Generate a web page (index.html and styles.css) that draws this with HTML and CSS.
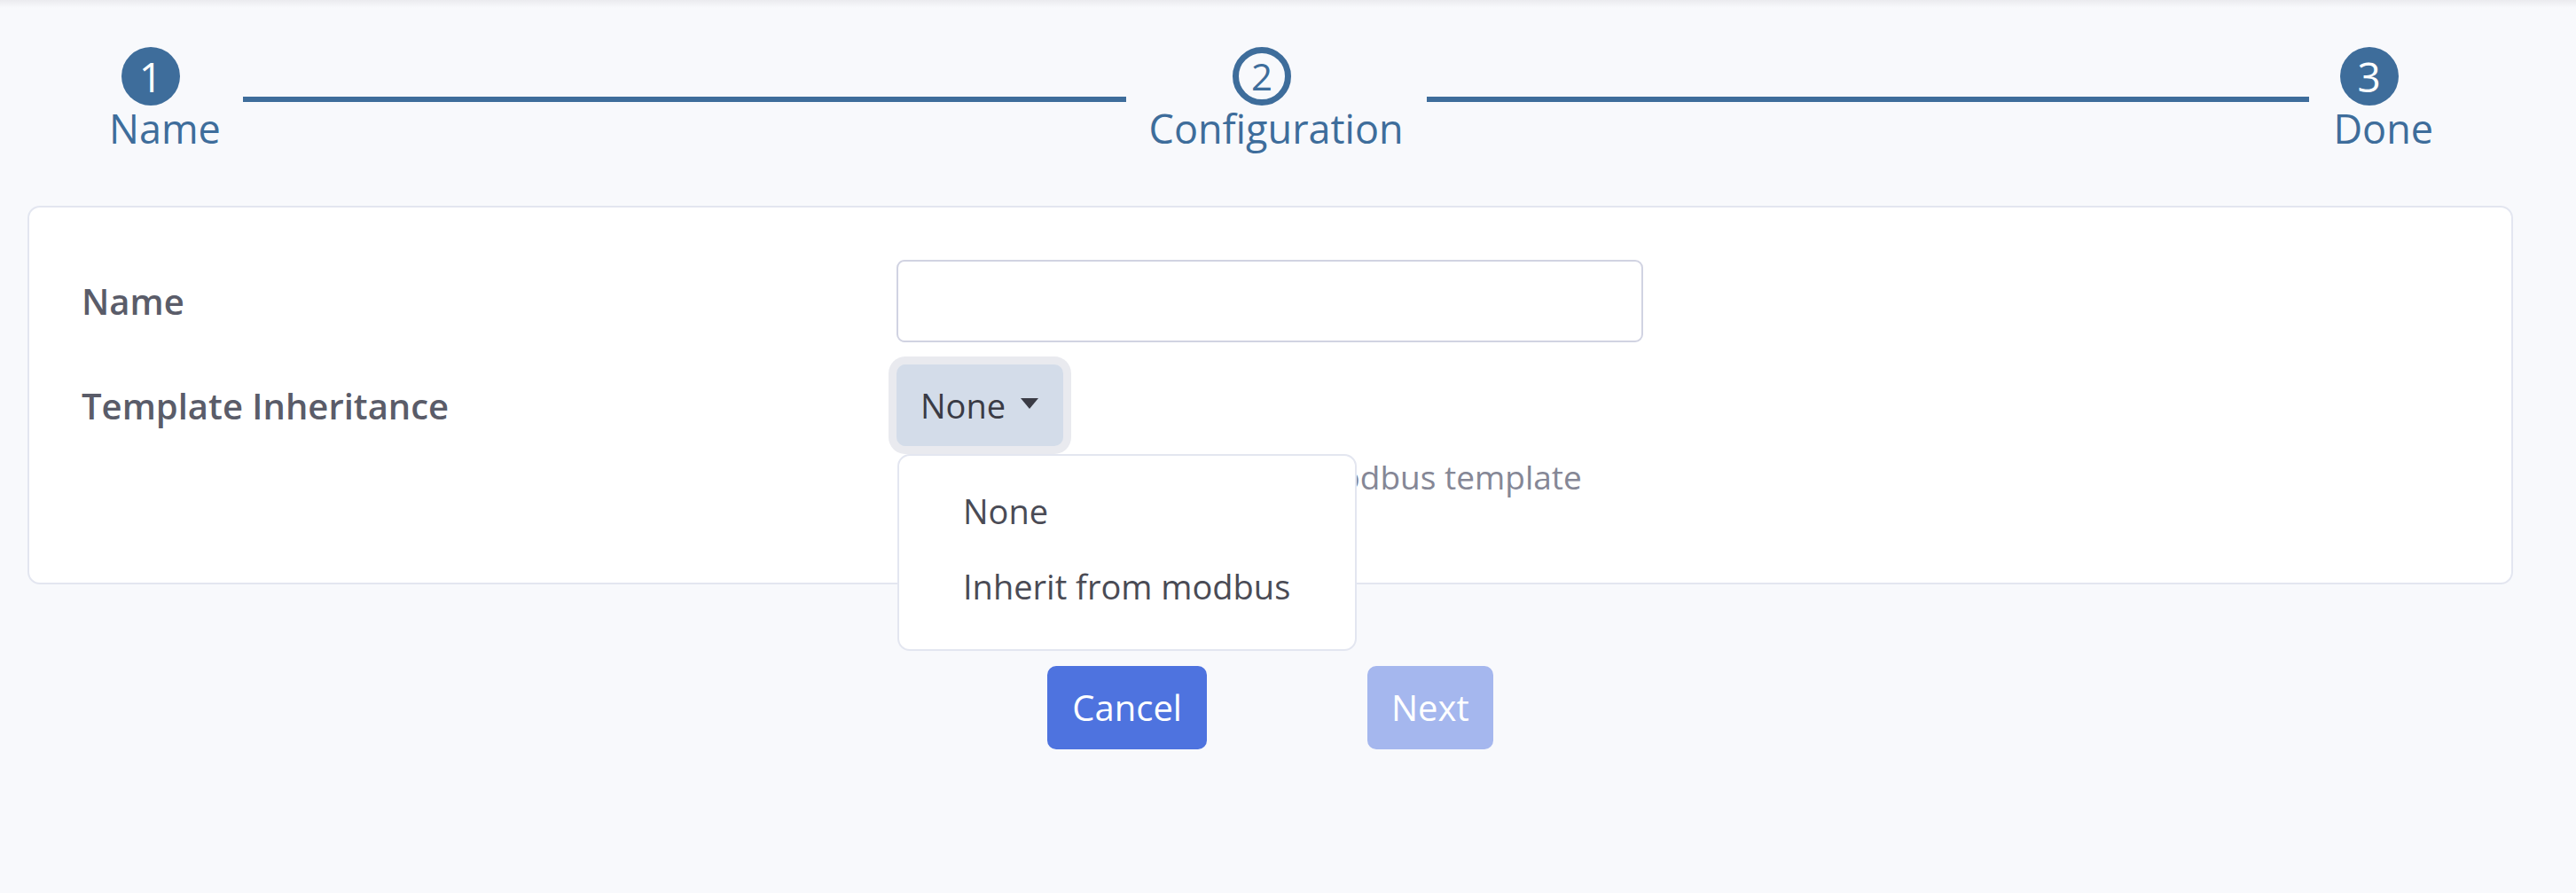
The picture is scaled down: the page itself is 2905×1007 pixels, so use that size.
FILE: index.html
```html
<!DOCTYPE html>
<html lang="en">
<head>
<meta charset="utf-8">
<title>Template wizard</title>
<link rel="stylesheet" href="styles.css">
</head>
<body>
<div class="topbar"></div>
<main class="wrapper">
  <nav class="steps">
    <div class="step">
      <div class="step-circle filled">1</div>
      <div class="step-label">Name</div>
    </div>
    <div class="step-line"></div>
    <div class="step">
      <div class="step-circle outline">2</div>
      <div class="step-label">Configuration</div>
    </div>
    <div class="step-line right"></div>
    <div class="step">
      <div class="step-circle filled">3</div>
      <div class="step-label">Done</div>
    </div>
  </nav>

  <section class="card">
    <div class="form-grid">
      <label class="form-label" for="tpl-name">Name</label>
      <input class="form-input" id="tpl-name" type="text">

      <div class="form-label">Template Inheritance</div>
      <div class="field">
        <div class="dropdown">
          <button class="dropdown-toggle" type="button">None<span class="caret"></span></button>
          <ul class="dropdown-menu">
            <li class="dropdown-item">None</li>
            <li class="dropdown-item">Inherit from modbus</li>
          </ul>
        </div>
        <p class="help">Choose to inherit from the modbus template</p>
      </div>
    </div>
  </section>

  <div class="actions">
    <button class="btn btn-primary" type="button">Cancel</button>
    <button class="btn btn-primary disabled" type="button">Next</button>
  </div>
</main>
</body>
</html>
```
FILE: styles.css
```css
* {
  box-sizing: border-box;
}

html, body {
  margin: 0;
  padding: 0;
}

body {
  background: #f8f9fc;
  font-family: "Open Sans", "Noto Sans", sans-serif;
  font-size: 40px;
  color: #5a5c69;
  min-height: 1007px;
}

.topbar {
  height: 9px;
  background: linear-gradient(#ebebef, #f8f9fc);
}

.wrapper {
  padding: 0 71px 0 31px;
}

/* ---------- stepper ---------- */
.steps {
  display: flex;
  align-items: flex-start;
  padding: 44px 90px 0 92px;
}

.step {
  display: flex;
  flex-direction: column;
  align-items: center;
  color: #3e6d9b;
}

.step-circle {
  width: 66px;
  height: 66px;
  border-radius: 50%;
  display: flex;
  align-items: center;
  justify-content: center;
  font-size: 46px;
  line-height: 1;
  margin-right: 32px;
}

.step-circle.filled {
  background: #3e6d9b;
  color: #ffffff;
}

.step-circle.outline {
  border: 7px solid #3e6d9b;
  color: #3e6d9b;
  font-size: 42px;
}

.step-label {
  font-size: 45px;
  line-height: 1;
  margin-top: 3px;
}

.step-line {
  flex: 1;
  height: 6px;
  background: #3e6d9b;
  margin: 56px 26px 0 25px;
}

.step-line.right {
  margin: 56px 27px 0 26px;
}

/* ---------- card ---------- */
.card {
  margin-top: 65px;
  background: #ffffff;
  border: 2px solid #e3e6f0;
  border-radius: 14px;
  padding: 59px 40px 92px 59px;
}

.form-grid {
  display: grid;
  grid-template-columns: 919px 842px;
  row-gap: 25px;
  align-items: start;
}

.form-label {
  font-weight: 600;
  font-size: 40px;
  line-height: 93px;
  color: #5a5c69;
}

.form-input {
  display: block;
  width: 842px;
  height: 93px;
  border: 2px solid #d1d3e2;
  border-radius: 9px;
  background: #ffffff;
  font: inherit;
  margin: 0;
}

.field {
  display: flex;
  flex-direction: column;
  align-items: flex-start;
}

.dropdown {
  position: relative;
}

.dropdown-toggle {
  display: flex;
  align-items: center;
  height: 92px;
  padding: 0 28px 0 27px;
  border: none;
  border-radius: 10px;
  background: #d3dce9;
  color: #3a3b45;
  font-family: inherit;
  font-size: 38px;
  line-height: 57px;
  box-shadow: 0 0 0 9px #e9eaef;
}

.caret {
  width: 0;
  height: 0;
  margin-left: 17px;
  margin-top: -4px;
  border-top: 12px solid #3a3b45;
  border-left: 10.5px solid transparent;
  border-right: 10.5px solid transparent;
}

.dropdown-menu {
  position: absolute;
  top: calc(100% + 9px);
  left: 1px;
  z-index: 5;
  width: 518px;
  margin: 0;
  padding: 20px 0 28px;
  list-style: none;
  background: #ffffff;
  border: 2px solid #e3e6f0;
  border-radius: 14px;
}

.dropdown-item {
  padding: 14px 72px;
  font-size: 38px;
  line-height: 57px;
  color: #4a4b55;
  white-space: nowrap;
}

.help {
  margin: 8px 0 0;
  font-size: 37px;
  line-height: 54px;
  color: #858796;
  white-space: nowrap;
}

/* ---------- actions ---------- */
.actions {
  display: flex;
  justify-content: center;
  gap: 181px;
  margin-top: 92px;
}

.btn {
  height: 94px;
  padding: 0 28px;
  border: none;
  border-radius: 10px;
  font-family: inherit;
  font-size: 40px;
  line-height: 60px;
  color: #ffffff;
}

.btn-primary {
  background: #4e73df;
}

.btn-primary.disabled {
  background: #a5b7ee;
  padding: 0 27px;
}
```
